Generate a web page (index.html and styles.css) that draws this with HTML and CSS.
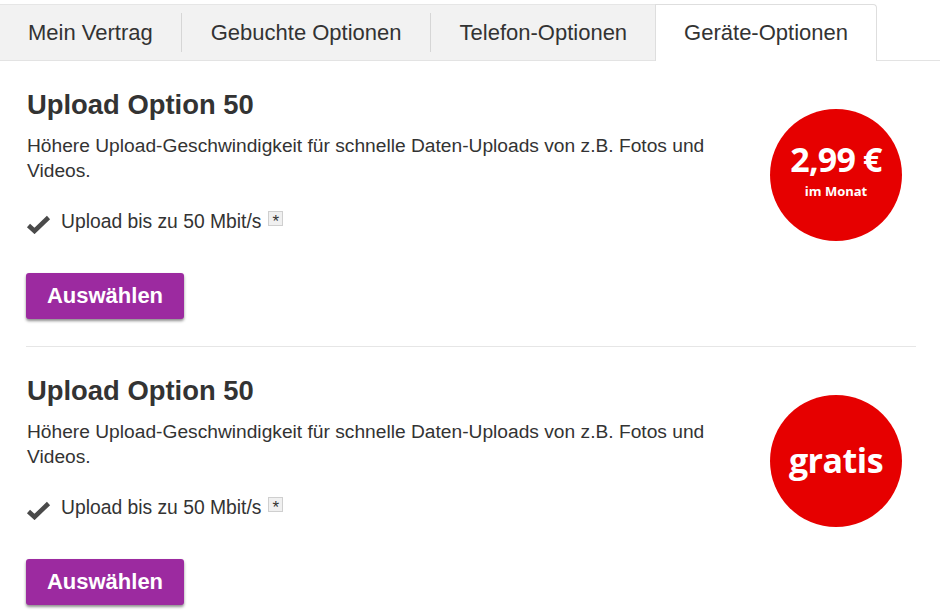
FILE: index.html
```html
<!DOCTYPE html>
<html lang="de">
<head>
<meta charset="utf-8">
<title>Geräte-Optionen</title>
<link rel="stylesheet" href="styles.css">
</head>
<body>
<nav class="tabs">
  <a class="tab first">Mein Vertrag</a>
  <span class="sep"><span class="sep-line"></span></span>
  <a class="tab">Gebuchte Optionen</a>
  <span class="sep"><span class="sep-line"></span></span>
  <a class="tab">Telefon-Optionen</a>
  <a class="tab active">Geräte-Optionen</a>
</nav>
<main class="options">
  <section class="option">
    <div class="option-body">
      <h2 class="option-title">Upload Option 50</h2>
      <p class="option-desc">Höhere Upload-Geschwindigkeit für schnelle Daten-Uploads von z.B. Fotos und Videos.</p>
      <ul class="features">
        <li class="feature">
          <svg class="check" width="25" height="20" viewBox="0 0 25 20"><path d="M2.5 11.5 L8.5 17 L22.5 3.5" fill="none" stroke="#4a4a4a" stroke-width="4.6" stroke-linecap="butt" stroke-linejoin="miter"/></svg>
          <span class="feature-text">Upload bis zu 50 Mbit/s</span>
          <span class="footnote">*</span>
        </li>
      </ul>
      <button class="select-btn">Auswählen</button>
    </div>
    <div class="price-badge">
      <span class="price">2,99 €</span>
      <span class="period">im Monat</span>
    </div>
  </section>
  <section class="option">
    <div class="option-body">
      <h2 class="option-title">Upload Option 50</h2>
      <p class="option-desc">Höhere Upload-Geschwindigkeit für schnelle Daten-Uploads von z.B. Fotos und Videos.</p>
      <ul class="features">
        <li class="feature">
          <svg class="check" width="25" height="20" viewBox="0 0 25 20"><path d="M2.5 11.5 L8.5 17 L22.5 3.5" fill="none" stroke="#4a4a4a" stroke-width="4.6" stroke-linecap="butt" stroke-linejoin="miter"/></svg>
          <span class="feature-text">Upload bis zu 50 Mbit/s</span>
          <span class="footnote">*</span>
        </li>
      </ul>
      <button class="select-btn">Auswählen</button>
    </div>
    <div class="price-badge">
      <span class="free">gratis</span>
    </div>
  </section>
</main>
</body>
</html>
```
FILE: styles.css
```css
* { box-sizing: border-box; }
html, body { margin: 0; padding: 0; background: #fff; }
body {
  font-family: "Liberation Sans", Arial, sans-serif;
  color: #333;
  padding-top: 4px;
}
.tabs {
  display: flex;
  width: 940px;
  height: 57px;
  border-bottom: 1px solid #e3e3e3;
}
.tab {
  display: flex;
  align-items: center;
  padding: 0 28px 0 29px;
  background: #f2f2f2;
  border-top: 1px solid #e6e6e6;
  font-size: 22px;
  color: #333;
  white-space: nowrap;
  height: 56px;
}
.tab.first { padding-left: 28px; padding-right: 28px; }
.tab.active {
  background: #fff;
  border: 1px solid #dedede;
  border-bottom: none;
  border-top-right-radius: 4px;
  padding: 0 28px;
  height: 57px;
}
.sep {
  display: flex;
  align-items: center;
  background: #f2f2f2;
  border-top: 1px solid #e6e6e6;
  height: 56px;
}
.sep-line {
  width: 1px;
  height: 39px;
  background: #d6d6d6;
}
.options {
  width: 916px;
  padding-left: 26px;
}
.option {
  display: flex;
  align-items: flex-start;
  padding: 29px 14px 27px 0;
  border-bottom: 1px solid #e6e6e6;
}
.option:last-child { border-bottom: none; }
.option-body {
  flex: 1;
  padding-left: 1px;
}
.option-title {
  margin: 0;
  font-size: 27.4px;
  line-height: 30px;
  font-weight: bold;
  color: #333;
}
.option-desc {
  margin: 13px 0 0;
  font-size: 19.2px;
  line-height: 25px;
}
.features {
  list-style: none;
  margin: 26px 0 0;
  padding: 0;
}
.feature {
  display: flex;
  align-items: center;
  height: 25px;
  margin-left: -1px;
}
.check {
  display: block;
  margin-right: 10px;
  margin-top: 4px;
  filter: blur(0.4px);
}
.feature-text {
  font-size: 19.3px;
  line-height: 25px;
}
.footnote {
  margin-left: 7px;
  margin-top: -7px;
  width: 15px;
  height: 15px;
  background: #f0f0f0;
  border: 1px solid #cfcfcf;
  font-size: 17px;
  line-height: 19px;
  text-align: center;
  color: #333;
}
.select-btn {
  display: block;
  margin: 39px 0 0 -1px;
  width: 158px;
  height: 46px;
  background: #9c2aa0;
  color: #fff;
  border: none;
  border-radius: 3px;
  box-shadow: 0 2px 3px rgba(0, 0, 0, 0.45);
  font-family: "Liberation Sans", Arial, sans-serif;
  font-size: 22px;
  font-weight: bold;
  padding: 0;
}
.price-badge {
  flex: none;
  width: 132px;
  height: 132px;
  margin-top: 19px;
  margin-left: 30px;
  border-radius: 50%;
  background: #e60000;
  color: #fff;
  display: flex;
  flex-direction: column;
  align-items: center;
  justify-content: center;
  font-family: "Open Sans", sans-serif;
  font-weight: bold;
}
.price {
  font-size: 34px;
  line-height: 34px;
  letter-spacing: -0.8px;
  margin-top: -9px;
}
.period {
  font-size: 13px;
  line-height: 16px;
  margin-top: 7px;
}
.free {
  font-size: 34px;
  line-height: 40px;
  letter-spacing: -0.5px;
  margin-top: -2px;
}
```
